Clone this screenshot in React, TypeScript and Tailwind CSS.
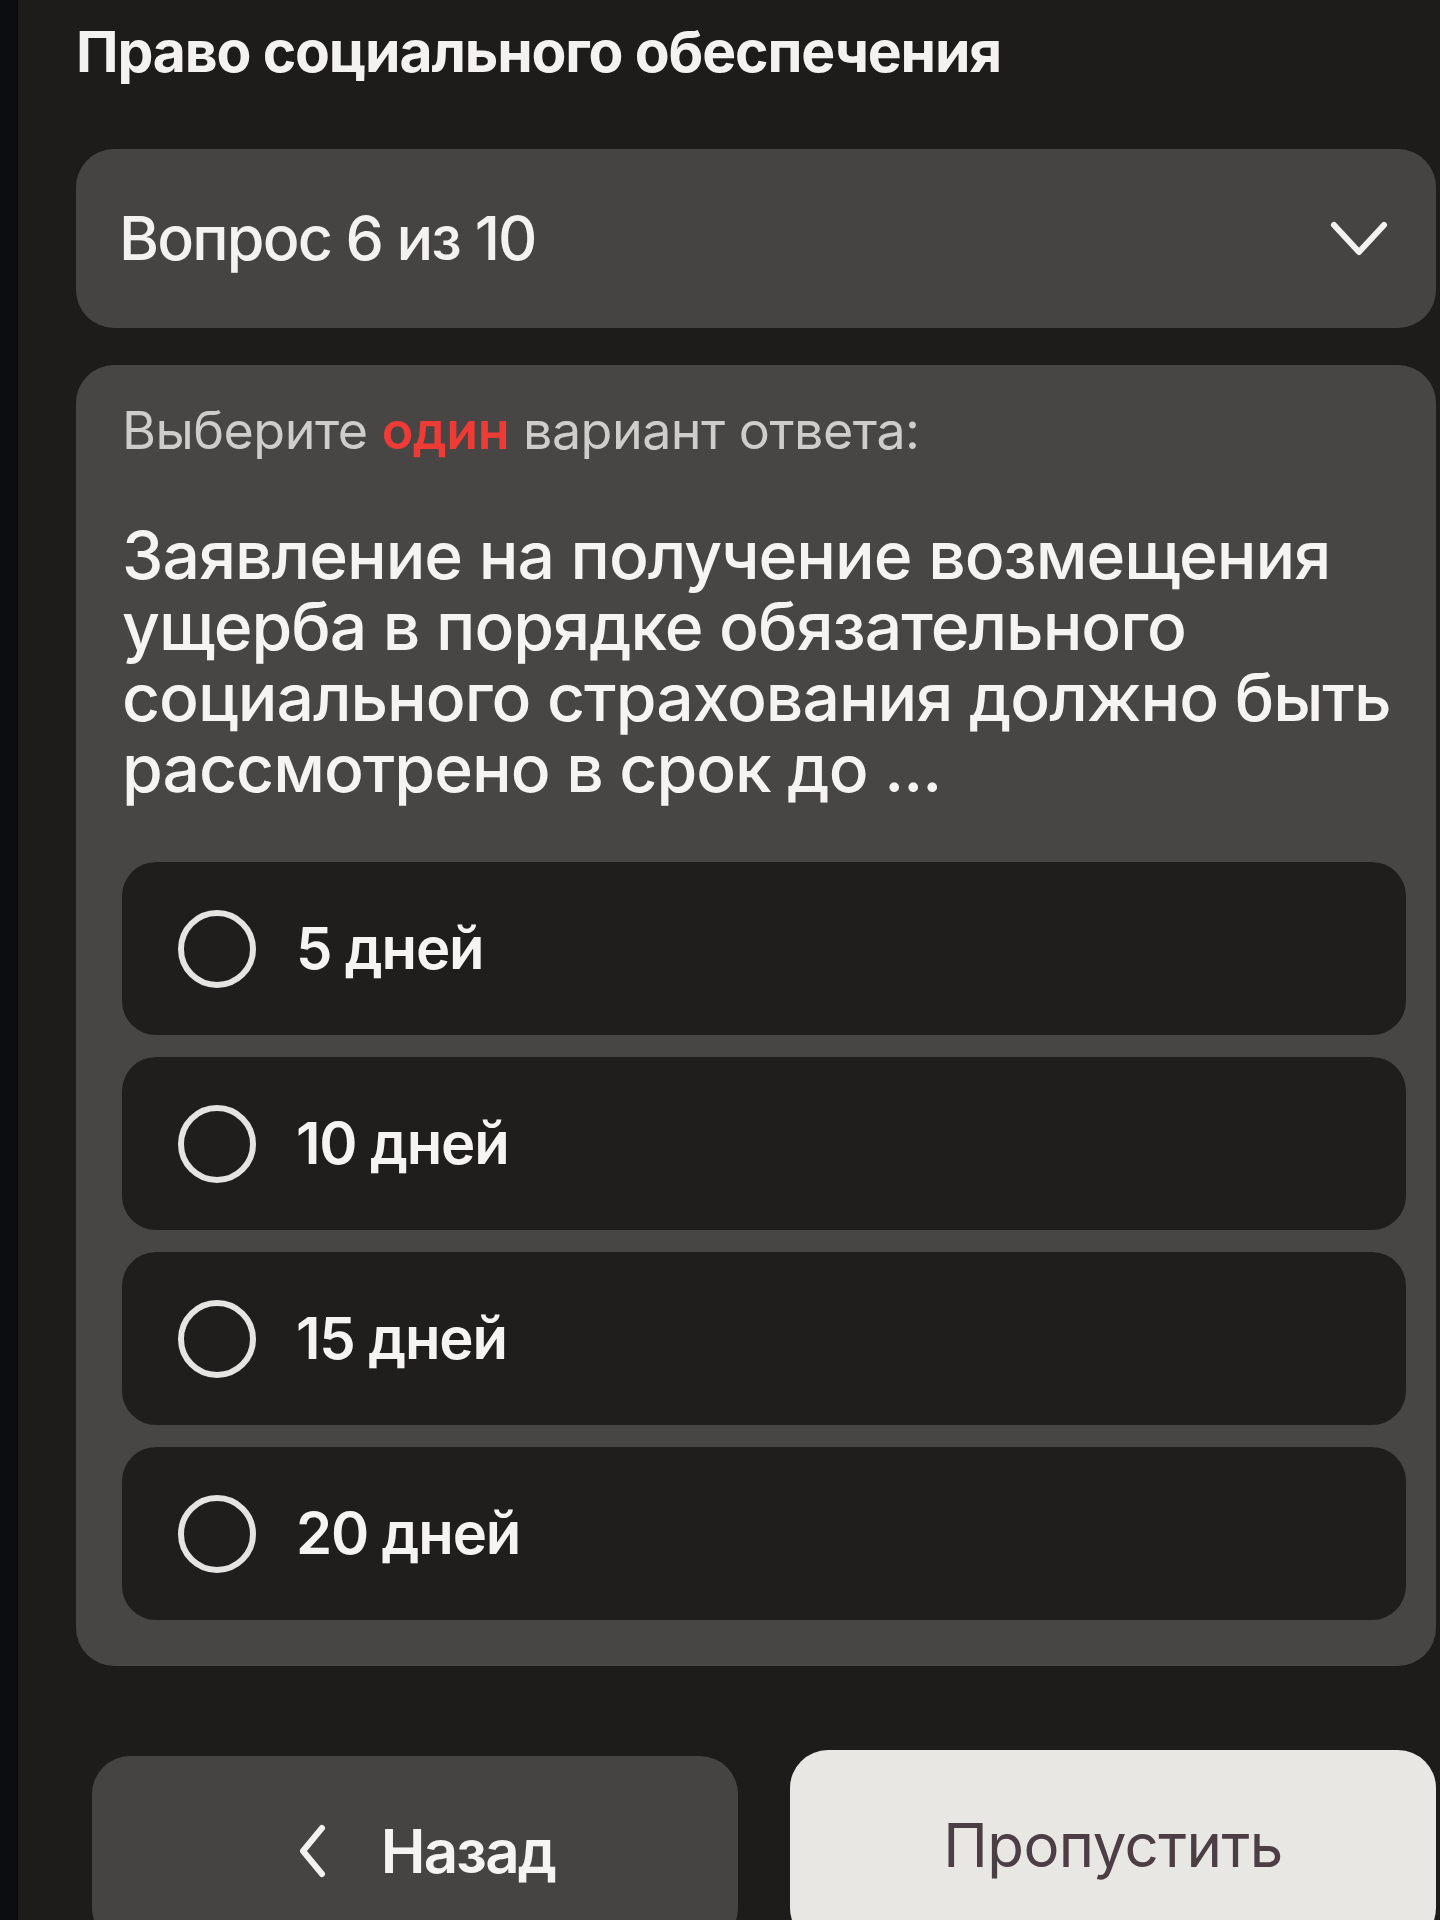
const OPTIONS = ["5 дней", "10 дней", "15 дней", "20 дней"];

function ChevronDown() {
  return (
    <svg width="58" height="38" viewBox="0 0 58 38" fill="none">
      <path
        d="M4 5 L29 32 L54 5"
        stroke="#f4f2f0"
        strokeWidth="6"
        strokeLinecap="round"
        strokeLinejoin="round"
      />
    </svg>
  );
}

function ChevronLeft() {
  return (
    <svg width="30" height="54" viewBox="0 0 30 54" fill="none">
      <path
        d="M25 4 L6 27 L25 50"
        stroke="#f4f2f0"
        strokeWidth="6"
        strokeLinecap="round"
        strokeLinejoin="round"
      />
    </svg>
  );
}

function Option({ label }: { label: string }) {
  return (
    <div className="flex h-[173px] items-center gap-[40px] rounded-[34px] bg-[#201e1d] pl-[56px]">
      <span className="h-[78px] w-[78px] shrink-0 rounded-full border-[6px] border-[#e6e4e1]" />
      <span className="text-[58px] font-semibold tracking-[-0.02em] text-[#f6f4f2]">
        {label}
      </span>
    </div>
  );
}

export default function App() {
  return (
    <div className="flex h-[1920px] w-[1440px] overflow-hidden bg-[#1e1c1b] font-['Inter',_'Liberation_Sans',_sans-serif]">
      <div className="w-[18px] shrink-0 bg-[#0c0d10]" />
      <main className="flex-1 pl-[58px] pr-[4px]">
        <h1 className="pt-[14px] text-[57px] font-bold leading-[76px] tracking-[-0.02em] text-[#f4f2f0]">
          Право социального обеспечения
        </h1>

        <div className="mt-[59px] flex h-[179px] items-center justify-between rounded-[38px] bg-[#454443] pl-[43px] pr-[48px]">
          <span className="text-[61px] font-medium tracking-[-0.03em] text-[#f4f2f0]">
            Вопрос 6 из 10
          </span>
          <ChevronDown />
        </div>

        <section className="mt-[37px] rounded-[38px] bg-[#474645] pb-[46px] pl-[46px] pr-[30px] pt-[36px]">
          <p className="text-[52px] leading-[60px] tracking-[-0.01em] text-[#cfcdcb]">
            Выберите <span className="font-semibold text-[#ef3b36]">один</span>{" "}
            вариант ответа:
          </p>
          <p className="mt-[59px] text-[66px] font-medium leading-[71px] tracking-[-0.015em] text-[#f6f4f2]">
            Заявление на получение возмещения ущерба в порядке обязательного
            социального страхования должно быть рассмотрено в срок до ...
          </p>
          <div className="mt-[58px] flex flex-col gap-[22px]">
            {OPTIONS.map((o) => (
              <Option key={o} label={o} />
            ))}
          </div>
        </section>

        <div className="mt-[90px] grid grid-cols-2 gap-[52px] pl-[16px]">
          <button className="flex h-[190px] items-center justify-center gap-[54px] rounded-[38px] bg-[#454443] pl-[22px]">
            <ChevronLeft />
            <span className="text-[60px] font-semibold tracking-[-0.03em] text-[#f6f4f2]">
              Назад
            </span>
          </button>
          <button className="-mt-[6px] flex h-[196px] items-center justify-center rounded-[38px] bg-[#e9e7e4] pb-[6px]">
            <span className="text-[60px] font-normal tracking-[-0.01em] text-[#4b3e45]">
              Пропустить
            </span>
          </button>
        </div>
      </main>
    </div>
  );
}
